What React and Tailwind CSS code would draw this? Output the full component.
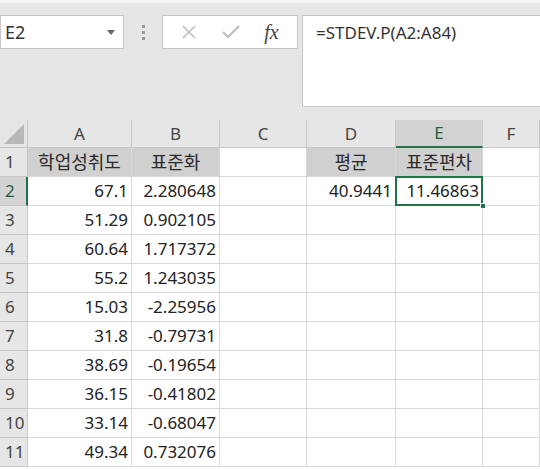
import React from 'react';

const rows = [
    ['67.1', '2.280648'],
    ['51.29', '0.902105'],
    ['60.64', '1.717372'],
    ['55.2', '1.243035'],
    ['15.03', '-2.25956'],
    ['31.8', '-0.79731'],
    ['38.69', '-0.19654'],
    ['36.15', '-0.41802'],
    ['33.14', '-0.68047'],
    ['49.34', '0.732076'],
];

const font = { fontFamily: '"Noto Sans", "Noto Sans CJK KR", sans-serif' };

const cols = 'grid grid-cols-[28px_104px_88px_87px_89px_87px_1fr]';

const Cell = ({ children, className = '' }) => (
    <div className={`h-[29px] border-r border-b border-[#d9d9d9] flex items-center px-[3px] text-[17px] text-[#222] ${className}`}>
        {children}
    </div>
);

const Label = ({ children }) => (
    <Cell className="bg-[#d0d0d0] justify-center">
        <span className="text-[18px] text-[#2a2a2a]">{children}</span>
    </Cell>
);

const RowHead = ({ n, active }) => (
    <div className={`h-[29px] border-r border-b border-[#c8c8c8] flex items-center pl-[5px] text-[17px] ${active ? 'bg-[#d3d3d3] text-[#1e5c38] border-r-2 border-r-[#217346]' : 'bg-[#e6e6e6] text-[#444]'}`}>
        {n}
    </div>
);

export default function App() {
    return (
        <div className="w-[540px] h-[469px] bg-white overflow-hidden" style={font}>
            {/* formula bar area */}
            <div className="h-[120px] bg-[#e6e6e6] border-t-[3px] border-[#f4f4f4] flex pt-[12px]">
                <div className="w-[124px] h-[34px] bg-white border border-[#c6c6c6] flex items-center justify-between pl-[4px] pr-[8px]">
                    <span className="text-[18px] text-[#333]">E2</span>
                    <svg width="8" height="5" viewBox="0 0 8 5"><path d="M0 0h8L4 5z" fill="#666" /></svg>
                </div>
                <div className="w-[38px] flex flex-col items-center justify-center gap-[3px] h-[34px]">
                    <span className="w-[3px] h-[3px] bg-[#9a9a9a]" />
                    <span className="w-[3px] h-[3px] bg-[#9a9a9a]" />
                    <span className="w-[3px] h-[3px] bg-[#9a9a9a]" />
                </div>
                <div className="w-[136px] h-[34px] bg-white border border-[#c6c6c6] flex items-center justify-around px-[6px]">
                    <svg width="16" height="16" viewBox="0 0 16 16"><path d="M2 2l12 12M14 2L2 14" stroke="#bdbdbd" strokeWidth="1.6" /></svg>
                    <svg width="18" height="14" viewBox="0 0 18 14"><path d="M1 7l5 5L17 1" stroke="#bdbdbd" strokeWidth="2.2" fill="none" /></svg>
                    <span className="text-[20px] italic text-[#444]" style={{ fontFamily: '"Liberation Serif", serif' }}>fx</span>
                </div>
                <div className="ml-[4px] flex-1 h-[92px] bg-white border border-[#c6c6c6] border-r-0 pl-[13px] pt-[4px] text-[17px] text-[#333]">
                    =STDEV.P(A2:A84)
                </div>
            </div>

            {/* grid */}
            <div className={cols}>
                <div className="h-[28px] bg-[#e6e6e6] border-r border-b border-[#c8c8c8] flex items-end justify-end p-[3px]">
                    <svg width="20" height="20" viewBox="0 0 20 20"><path d="M20 0V20H0z" fill="#b8b8b8" /></svg>
                </div>
                {['A', 'B', 'C', 'D', 'E', 'F'].map((c) => (
                    <div
                        key={c}
                        className={`h-[28px] border-r border-b flex items-center justify-center text-[17px] ${c === 'E' ? 'bg-[#d3d3d3] text-[#1e5c38] border-b-2 border-b-[#217346] border-r-[#c8c8c8]' : 'bg-[#e6e6e6] text-[#444] border-[#c8c8c8]'}`}
                    >
                        {c}
                    </div>
                ))}

                <RowHead n="1" />
                <Label>학업성취도</Label>
                <Label>표준화</Label>
                <Cell />
                <Label>평균</Label>
                <Label>표준편차</Label>
                <Cell />

                {rows.map(([a, b], i) => (
                    <React.Fragment key={i}>
                        <RowHead n={i + 2} active={i === 0} />
                        <Cell className="justify-end">{a}</Cell>
                        <Cell className="justify-end">{b}</Cell>
                        <Cell />
                        <Cell className="justify-end">{i === 0 ? '40.9441' : ''}</Cell>
                        {i === 0 ? (
                            <div className="h-[29px] relative border-b border-r border-[#d9d9d9]">
                                <div className="absolute left-[-1px] top-[-1px] right-[-1px] bottom-[-1px] border-2 border-[#217346] flex items-center justify-end pr-[2px] text-[17px] text-[#222]">
                                    11.46863
                                </div>
                                <div className="absolute right-[-4px] bottom-[-4px] w-[6px] h-[6px] bg-[#217346] border border-white" />
                            </div>
                        ) : (
                            <Cell />
                        )}
                        <Cell />
                    </React.Fragment>
                ))}
            </div>
        </div>
    );
}
